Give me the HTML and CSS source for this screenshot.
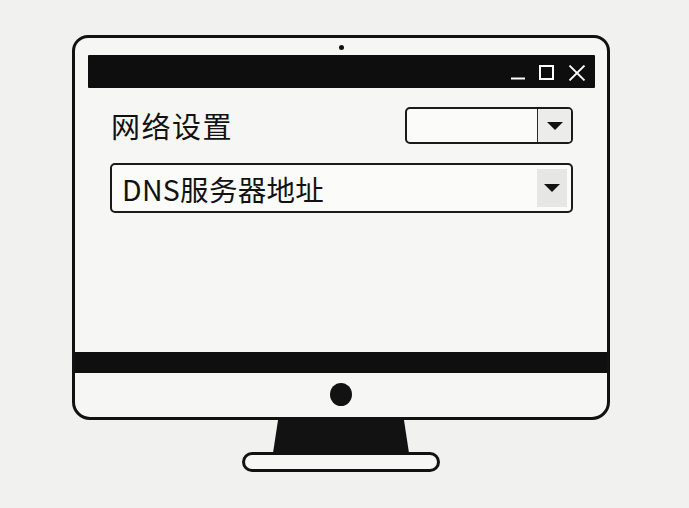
FILE: index.html
```html
<!DOCTYPE html>
<html lang="zh-CN">
<head>
<meta charset="utf-8">
<title>网络设置</title>
<link rel="stylesheet" href="styles.css">
</head>
<body>
<div class="desk">
  <div class="monitor">
    <div class="bezel-top"><span class="camera"></span></div>
    <div class="screen">
      <div class="titlebar">
        <svg class="ctl" width="16" height="16" viewBox="0 0 16 16"><path d="M1 13.5H15" stroke="#fff" stroke-width="2"/></svg>
        <svg class="ctl" width="16" height="16" viewBox="0 0 16 16"><rect x="1" y="1" width="13" height="13" fill="none" stroke="#fff" stroke-width="2"/></svg>
        <svg class="ctl" width="18" height="16" viewBox="0 0 18 16"><path d="M1.5 0.5L16.5 15.5M16.5 0.5L1.5 15.5" stroke="#fff" stroke-width="1.8"/></svg>
      </div>
      <div class="content">
        <div class="row">
          <h1 class="heading">网络设置</h1>
          <div class="select select-small">
            <span class="select-value"></span>
            <span class="select-btn"><span class="caret"></span></span>
          </div>
        </div>
        <div class="select select-large">
          <span class="select-value">DNS服务器地址</span>
          <span class="select-btn"><span class="caret"></span></span>
        </div>
      </div>
    </div>
    <div class="chin-bar"></div>
    <div class="chin"><span class="logo-dot"></span></div>
  </div>
  <div class="stand"></div>
  <div class="base"></div>
</div>
</body>
</html>
```

FILE: styles.css
```css
html, body {
  margin: 0;
  padding: 0;
}

body {
  background: #f1f1f0;
  font-family: "Noto Sans CJK SC", "Noto Sans", sans-serif;
  color: #121212;
}

.desk {
  width: 538px;
  padding: 35px 0 0 72px;
  display: flex;
  flex-direction: column;
  align-items: center;
}

/* monitor body */
.monitor {
  box-sizing: border-box;
  width: 538px;
  height: 385px;
  border: 3px solid #121212;
  border-radius: 16px 16px 18px 18px;
  background: #f6f6f5;
  display: flex;
  flex-direction: column;
  overflow: hidden;
}

.bezel-top {
  height: 17px;
  display: flex;
  justify-content: center;
  align-items: center;
  padding-left: 1px;
}

.camera {
  width: 5px;
  height: 5px;
  border-radius: 50%;
  background: #121212;
  margin-top: 2px;
}

.screen {
  flex: 1;
  margin: 0 12px 0 13px;
  display: flex;
  flex-direction: column;
}

.titlebar {
  height: 33px;
  background: #0e0e0e;
  display: flex;
  justify-content: flex-end;
  align-items: center;
  gap: 13px;
  padding-right: 9px;
  border-radius: 1px;
}

.ctl {
  display: block;
  margin-top: 2px;
}

.content {
  padding: 19px 22px 0 22px;
  display: flex;
  flex-direction: column;
  gap: 19px;
}

.row {
  display: flex;
  justify-content: space-between;
  align-items: center;
}

.heading {
  margin: 0 0 0 1px;
  font-size: 29px;
  font-weight: 400;
  line-height: 37px;
  letter-spacing: 1.5px;
}

/* dropdowns */
.select {
  box-sizing: border-box;
  border: 2px solid #1a1a1a;
  border-radius: 5px;
  background: #fbfbfa;
  display: flex;
  align-items: stretch;
}

.select-small {
  width: 168px;
  height: 37px;
}

.select-small .select-value {
  flex: 1;
}

.select-small .select-btn {
  width: 33px;
  border-left: 1.5px solid #2a2a2a;
  background: #ececeb;
  border-radius: 0 3px 3px 0;
}

.select-large {
  height: 50px;
  align-items: center;
  padding: 0 4px 0 10px;
}

.select-large .select-value {
  flex: 1;
  font-size: 28.5px;
  line-height: 40px;
  padding-top: 1px;
  letter-spacing: 0.3px;
}

.select-large .select-btn {
  width: 30px;
  height: 38px;
  background: #e6e6e5;
}

.select-btn {
  display: flex;
  justify-content: center;
  align-items: center;
}

.caret {
  width: 0;
  height: 0;
  border-left: 8px solid transparent;
  border-right: 8px solid transparent;
  border-top: 8px solid #121212;
}

/* lower bezel */
.chin-bar {
  height: 21px;
  background: #0f0f0f;
}

.chin {
  height: 44px;
  display: flex;
  justify-content: center;
  align-items: center;
}

.logo-dot {
  width: 22px;
  height: 23px;
  border-radius: 50%;
  background: #121212;
  margin-bottom: 1px;
}

/* stand */
.stand {
  width: 136px;
  height: 33px;
  background: #121212;
  clip-path: polygon(3.7% 0, 96.3% 0, 100% 100%, 0 100%);
}

.base {
  box-sizing: border-box;
  width: 198px;
  height: 20px;
  margin-top: -1px;
  border: 3px solid #121212;
  border-radius: 10px;
  background: #f6f6f5;
}
```
